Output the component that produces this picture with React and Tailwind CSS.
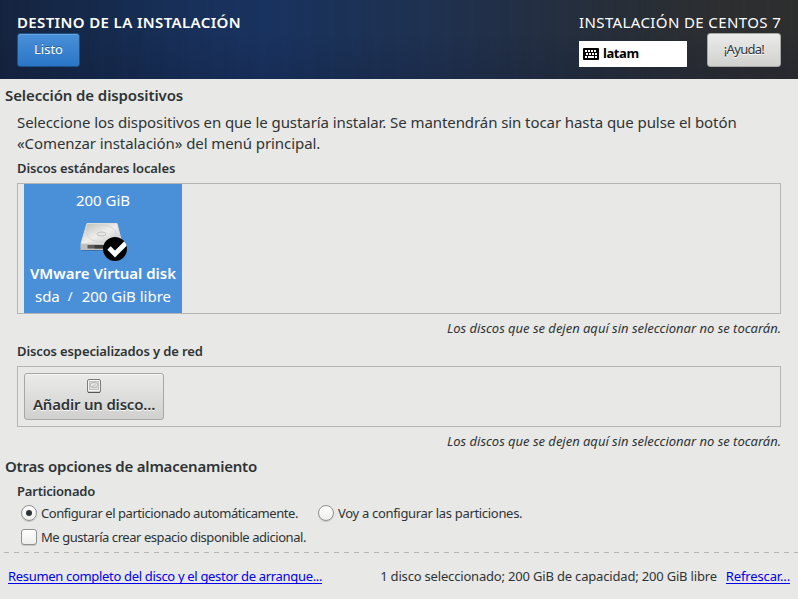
function Header() {
  return (
    <header className="flex h-[79px] justify-between bg-[repeating-linear-gradient(90deg,rgba(5,15,45,0.025)_0px,transparent_5px,rgba(50,90,150,0.015)_9px,transparent_14px,rgba(5,15,45,0.02)_19px,transparent_23px),linear-gradient(180deg,transparent_40%,rgba(12,20,50,0.2)_100%),linear-gradient(90deg,#15243f_0px,#152a4c_100px,#18305a_190px,#193360_270px,#1b3257_340px,#1f3150_430px,#222f44_520px,#272e38_620px,#2d2e2f_730px,#2e2e2e_798px)] pl-[17px] pr-[17px] pt-[12px] text-white">
      <div>
        <h1 className="h-[21px] whitespace-nowrap text-[15px] font-semibold leading-[21px] tracking-[0.37px]">DESTINO DE LA INSTALACIÓN</h1>
        <button className="flex h-[34px] w-[63px] items-center justify-center rounded-[3px] border border-[#1c5187] bg-linear-to-b from-[#4a90d9] to-[#2a76c6] text-[13px] shadow-[inset_0_1px_0_#67a5e2] [text-shadow:0_-1px_0_#1f5c9c]">Listo</button>
      </div>
      <div className="w-[202px]">
        <div className="h-[21px] whitespace-nowrap text-[15px] leading-[21px] tracking-[0.39px]">INSTALACIÓN DE CENTOS 7</div>
        <div className="flex items-end justify-between">
          <div className="flex h-[26px] w-[108px] items-center bg-white pl-[4px] text-[13px] font-bold tracking-[-0.4px] text-black">
            <svg width="16" height="12" viewBox="0 0 16 12" className="mr-[4px]">
              <rect width="16" height="12" rx="1" />
              <path d="M2 3h2M5 3h2M8 3h2M11 3h2M3 6h2M6 6h2M9 6h2M12 6h2M2 9h2M5 9h6M12 9h2" stroke="white" strokeWidth="2" />
            </svg>
            <span>latam</span>
          </div>
          <button className="flex h-[34px] w-[74px] items-center justify-center rounded-[3px] border border-[#a6a8a4] bg-linear-to-b from-[#ebebea] to-[#d0d0ce] text-[13px] tracking-[-0.7px] text-[#2e3436] [text-shadow:0_1px_0_white]">¡Ayuda!</button>
        </div>
      </div>
    </header>
  );
}

function DriveIcon() {
  return (
    <svg width="48" height="44" viewBox="0 0 48 44">
      <defs>
        <linearGradient id="top" x1="0" y1="0" x2="1" y2="1">
          <stop offset="0" stopColor="#b9b9b7" />
          <stop offset="0.5" stopColor="#eeeeed" />
          <stop offset="1" stopColor="#c2c2c0" />
        </linearGradient>
        <clipPath id="badge"><circle cx="36" cy="29" r="12.200" /></clipPath>
      </defs>
      <path d="M1 28h43v3H3z" fill="#2f5f92" opacity="0.6" />
      <path d="M8 3.500h30L43 23.500H2z" fill="url(#top)" stroke="#dededc" />
      <path d="M1.500 24h42v6h-42z" fill="#c0c1be" />
      <path d="M8.500 25h18v3.500h-18z" fill="#5c5e5c" />
      <path d="M15.500 25h11v3.500h-11z" fill="#3c3e3d" />
      <ellipse cx="22.500" cy="13.500" rx="14.500" ry="8.500" fill="none" stroke="#d4d5d3" />
      <ellipse cx="22.500" cy="14" rx="4.500" ry="2" fill="#e6e6e5" stroke="#bfc0be" />
      <circle cx="36" cy="29" r="12" fill="#000" />
      <path d="M30 28l6 6L47 23" fill="none" stroke="white" strokeWidth="4.800" clipPath="url(#badge)" />
    </svg>
  );
}

function SmallDrive() {
  return (
    <svg width="14" height="14" viewBox="0 0 14 14">
      <rect x="0.500" y="0.500" width="13" height="13" rx="1.500" fill="#f2f2f1" stroke="#7c7d7b" />
      <path d="M1 13.300h12" stroke="#4c4d4c" />
      <rect x="2.500" y="2.500" width="9" height="8" fill="#dededd" stroke="#c5c6c4" />
      <ellipse cx="7" cy="6" rx="4" ry="2.500" fill="#e8e8e7" stroke="#b5b6b4" />
      <path d="M5 7.500l4-2" stroke="#bfc0be" />
    </svg>
  );
}

function Note() {
  return <p className="h-[16px] self-end whitespace-nowrap text-[13px] italic leading-[16px] tracking-[-0.02px]">Los discos que se dejen aquí sin seleccionar no se tocarán.</p>;
}

function Radio({ checked }) {
  return (
    <span className="flex size-[16px] shrink-0 items-center justify-center rounded-full border border-[#8f918e] bg-linear-to-b from-white to-[#ededec] shadow-[0_1px_0_#c8c8c6]">
      {checked && <span className="size-[6px] rounded-full bg-[#2e3436]" />}
    </span>
  );
}

export default function App() {
  return (
    <div className="flex h-[599px] w-[798px] flex-col overflow-hidden bg-[#e8e8e6] font-['Noto_Sans',sans-serif] text-[#2e3436]">
      <Header />
      <main className="flex flex-col pl-[17px] pr-[17px] pt-[6px]">
        <h2 className="-ml-[12px] h-[20px] whitespace-nowrap text-[15px] font-semibold leading-[20px] tracking-[-0.1px]">Selección de dispositivos</h2>
        <p className="mt-[7px] whitespace-nowrap text-[15px] leading-[21px] tracking-[-0.077px]">
          <span className="block">Seleccione los dispositivos en que le gustaría instalar. Se mantendrán sin tocar hasta que pulse el botón</span>
          <span className="block">«Comenzar instalación» del menú principal.</span>
        </p>
        <h3 className="mt-[6px] h-[16px] whitespace-nowrap text-[13px] font-semibold leading-[16px] tracking-[-0.12px]">Discos estándares locales</h3>
        <div className="mt-[7px] h-[131px] border border-[#b5b6b3] pl-[6px]">
          <div className="flex h-[129px] w-[158px] flex-col items-center bg-[#4a90d9] pt-[5px] text-[15px] leading-[22px] text-white">
            <span>200 GiB</span>
            <div className="h-[51px] pt-[9px]"><DriveIcon /></div>
            <span className="h-[23px] whitespace-nowrap font-semibold">VMware Virtual disk</span>
            <div className="flex whitespace-nowrap"><span>sda</span><span className="ml-[8px] mr-[9px] text-[13px]">/</span><span>200 GiB libre</span></div>
          </div>
        </div>
        <div className="mt-[6px] flex flex-col"><Note /></div>
        <h3 className="mt-[7px] h-[16px] whitespace-nowrap text-[13px] font-semibold leading-[16px] tracking-[-0.12px]">Discos especializados y de red</h3>
        <div className="mt-[7px] h-[61px] border border-[#b5b6b3] pl-[6px] pt-[6px]">
          <button className="flex h-[47px] w-[140px] flex-col items-center rounded-[3px] border border-[#a6a8a4] bg-linear-to-b from-[#ebebea] to-[#d0d0ce] pt-[5px] text-[15px] font-semibold leading-[22px] tracking-[-0.2px] shadow-[inset_0_1px_0_#f4f4f3] [text-shadow:0_1px_0_white]">
            <SmallDrive />
            <span className="whitespace-nowrap">Añadir un disco...</span>
          </button>
        </div>
        <div className="mt-[6px] flex flex-col"><Note /></div>
        <h2 className="-ml-[12px] mt-[7px] h-[20px] whitespace-nowrap text-[15px] font-semibold leading-[20px] tracking-[-0.21px]">Otras opciones de almacenamiento</h2>
        <h3 className="mt-[7px] h-[16px] whitespace-nowrap text-[13px] font-semibold leading-[16px] tracking-[-0.2px]">Particionado</h3>
        <div className="mt-[5px] flex h-[18px] items-center whitespace-nowrap pl-[4px] text-[13px]">
          <div className="flex w-[297px] items-center gap-[4px]"><Radio checked /><span className="leading-[18px] tracking-[-0.44px]">Configurar el particionado automáticamente.</span></div>
          <div className="flex items-center gap-[4px]"><Radio /><span className="leading-[18px] tracking-[-0.31px]">Voy a configurar las particiones.</span></div>
        </div>
        <div className="mt-[6px] flex h-[18px] items-center gap-[4px] whitespace-nowrap pl-[4px] text-[13px]">
          <span className="size-[16px] rounded-[3px] border border-[#8f918e] bg-linear-to-b from-white to-[#ededec] shadow-[0_1px_0_#c8c8c6]" />
          <span className="leading-[18px] tracking-[-0.44px]">Me gustaría crear espacio disponible adicional.</span>
        </div>
      </main>
      <div className="ml-[4px] mt-[6px] h-px shrink-0 bg-[repeating-linear-gradient(90deg,#b5b6b3_0px,#b5b6b3_5px,transparent_5px,transparent_10px)]" />
      <footer className="mt-[15px] flex h-[18px] justify-between whitespace-nowrap px-[8px] text-[13px] leading-[17px]">
        <a className="h-[16px] border-b border-[#0000ee] tracking-[-0.32px] text-[#0000ee]">Resumen completo del disco y el gestor de arranque...</a>
        <div className="flex">
          <span className="mr-[9px] tracking-[-0.18px]">1 disco seleccionado; 200 GiB de capacidad; 200 GiB libre</span>
          <a className="h-[16px] border-b border-[#0000ee] tracking-[-0.14px] text-[#0000ee]">Refrescar...</a>
        </div>
      </footer>
    </div>
  );
}
